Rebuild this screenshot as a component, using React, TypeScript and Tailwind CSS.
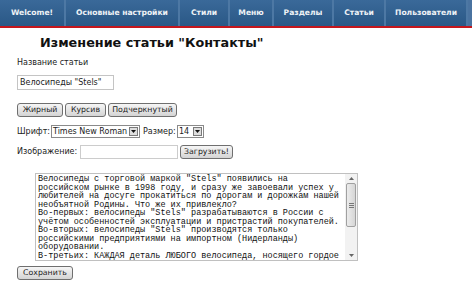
import React from 'react';

const navItems = [
  { label: 'Welcome!', w: 'w-[66px]' },
  { label: 'Основные настройки', w: 'w-[114px]' },
  { label: 'Стили', w: 'w-[50px]' },
  { label: 'Меню', w: 'w-[44px]' },
  { label: 'Разделы', w: 'w-[60px]' },
  { label: 'Статьи', w: 'w-[52px]' },
  { label: 'Пользователи', w: 'w-[82px]' },
];

const articleText = `Велосипеды с торговой маркой "Stels" появились на
российском рынке в 1998 году, и сразу же завоевали успех у
любителей на досуге прокатиться по дорогам и дорожкам нашей
необъятной Родины. Что же их привлекло?
Во-первых: велосипеды "Stels" разрабатываются в России с
учётом особенностей эксплуатации и пристрастий покупателей.
Во-вторых: велосипеды "Stels" производятся только
российскими предприятиями на импортном (Нидерланды)
оборудовании.
В-третьих: КАЖДАЯ деталь ЛЮБОГО велосипеда, носящего гордое`;

function Btn({ children, className = '' }: { children: React.ReactNode; className?: string }) {
  return (
    <button
      type="button"
      className={`flex h-[14px] items-center justify-center rounded-[3px] border border-[#6f6f6f] bg-gradient-to-b from-[#f6f6f6] to-[#d4d4d4] text-[7.8px] leading-[12px] whitespace-nowrap text-[#222] ${className}`}
    >
      {children}
    </button>
  );
}

function SelectBox({ value, w }: { value: string; w: string }) {
  return (
    <div className={`flex h-[13px] items-stretch border border-[#8a8a8a] bg-white ${w}`}>
      <span className="flex-1 overflow-hidden whitespace-nowrap pl-[1px] text-[8px] leading-[11px] text-[#222]">
        {value}
      </span>
      <span className="my-[1px] mr-[1px] flex w-[9px] items-center justify-center border border-[#7a7a7a] bg-[#dedede]">
        <svg width="5" height="3" viewBox="0 0 5 3">
          <path d="M0 0h5L2.5 3z" fill="#111" />
        </svg>
      </span>
    </div>
  );
}

export default function App() {
  return (
    <div className="h-[290px] w-[472px] overflow-hidden bg-white font-['DejaVu_Sans',sans-serif] text-[#222]">
      <nav className="flex h-[28px] items-stretch border-b-2 border-[#c4161c] bg-gradient-to-b from-[#3a6999] to-[#2a5886]">
        {navItems.map((item) => (
          <div
            key={item.label}
            className={`flex items-center justify-center border-r-2 border-[#4d78a4] text-[7.6px] font-bold text-[#eef2f6] ${item.w}`}
          >
            {item.label}
          </div>
        ))}
        <div className="flex-1 bg-[#4a73a0]" />
      </nav>

      <h1 className="mt-[7px] pl-[40px] text-[12.8px] font-bold leading-[16px] text-[#111]">
        Изменение статьи "Контакты"
      </h1>

      <div className="pl-[17px]">
        <div className="mt-[7px] text-[8px] leading-[10px]">Название статьи</div>
        <div className="mt-[7px] flex h-[15px] w-[97px] items-center border border-[#c4c4c4] px-[2px] text-[8px]">
          Велосипеды "Stels"
        </div>

        <div className="mt-[13px] flex gap-[2px]">
          <Btn className="w-[46px]">Жирный</Btn>
          <Btn className="w-[41px]">Курсив</Btn>
          <Btn className="w-[69px]">Подчеркнутый</Btn>
        </div>

        <div className="mt-[8px] flex h-[13px] items-center text-[8px]">
          <span className="w-[34px]">Шрифт:</span>
          <SelectBox value="Times New Roman" w="w-[89px]" />
          <span className="ml-[3px] w-[34px]">Размер:</span>
          <SelectBox value="14" w="w-[27px]" />
        </div>

        <div className="mt-[7px] flex h-[14px] items-center text-[8px]">
          <span className="w-[63px]">Изображение:</span>
          <div className="h-[14px] w-[98px] border border-[#cccccc]" />
          <Btn className="ml-[2px] w-[53px]">Загрузить!</Btn>
        </div>

        <div className="ml-[18px] mt-[14px] flex h-[88px] w-[323px] border border-[#c0c0c0]">
          <pre className="flex-1 overflow-hidden whitespace-pre pl-[2px] pt-[1px] font-['Liberation_Mono',monospace] text-[8.5px] leading-[8.5px] text-[#111]">
            {articleText}
          </pre>
          <div className="flex w-[12px] flex-col bg-[#f2f2f2]">
            <div className="flex h-[9px] items-center justify-center">
              <svg width="5" height="3" viewBox="0 0 5 3">
                <path d="M0 3h5L2.5 0z" fill="#666" />
              </svg>
            </div>
            <div className="mx-[1px] flex h-[44px] items-center justify-center rounded-[2px] border border-[#a0a0a0] bg-gradient-to-r from-[#ececec] to-[#d6d6d6]">
              <div className="flex flex-col gap-[1px]">
                <div className="h-px w-[5px] bg-[#777]" />
                <div className="h-px w-[5px] bg-[#777]" />
                <div className="h-px w-[5px] bg-[#777]" />
              </div>
            </div>
            <div className="flex-1" />
            <div className="flex h-[9px] items-center justify-center">
              <svg width="5" height="3" viewBox="0 0 5 3">
                <path d="M0 0h5L2.5 3z" fill="#666" />
              </svg>
            </div>
          </div>
        </div>

        <Btn className="mt-[5px] w-[56px]">Сохранить</Btn>
      </div>
    </div>
  );
}
